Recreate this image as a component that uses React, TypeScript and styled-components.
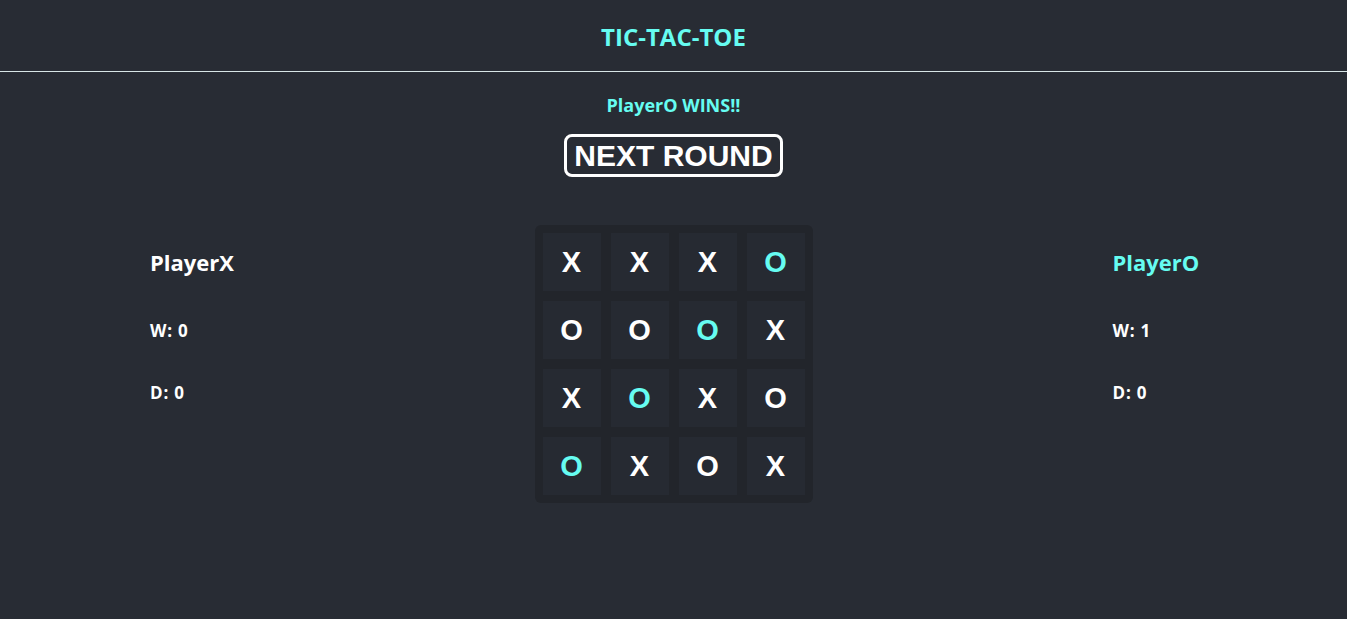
import styled, { createGlobalStyle } from 'styled-components';

const CYAN = '#66fcf1';

const GlobalStyle = createGlobalStyle`
  body {
    margin: 0;
    background: #282c34;
    font-family: "Open Sans", "Noto Sans", sans-serif;
    color: #fff;
  }
`;

const Page = styled.div`
  min-height: 619px;
  background: #282c34;
`;

const Header = styled.header`
  height: 71px;
  display: flex;
  align-items: center;
  justify-content: center;
  border-bottom: 1px solid #d8e6e6;
`;

const Title = styled.h1`
  margin: 2px 0 0;
  font-size: 24px;
  font-weight: 700;
  color: ${CYAN};
`;

const Status = styled.div`
  display: flex;
  flex-direction: column;
  align-items: center;
  padding-top: 20px;
`;

const Winner = styled.div`
  font-size: 18px;
  font-weight: 700;
  color: ${CYAN};
  line-height: 26px;
`;

const NextButton = styled.button`
  margin-top: 16px;
  font-family: "Liberation Sans", Arial, sans-serif;
  font-size: 30px;
  font-weight: 700;
  color: #fff;
  background: transparent;
  border: 3px solid #fff;
  border-radius: 8px;
  padding: 1px 7px;
  line-height: 35px;
  cursor: pointer;
`;

const Arena = styled.main`
  display: grid;
  grid-template-columns: 1fr 278px 1fr;
  margin-top: 48px;
`;

const PlayerCol = styled.div<{ $pad: number }>`
  padding-left: ${p => p.$pad}px;
  padding-top: 22px;
  display: flex;
  flex-direction: column;
`;

const PlayerName = styled.div<{ $win: boolean }>`
  font-size: 22px;
  font-weight: 700;
  line-height: 30px;
  color: ${p => (p.$win ? CYAN : '#fff')};
`;

const Stats = styled.div`
  display: flex;
  flex-direction: column;
  gap: 38px;
  margin-top: 42px;
`;

const Stat = styled.div`
  font-size: 17px;
  font-weight: 700;
  line-height: 24px;
  letter-spacing: 0.8px;
`;

const Board = styled.div`
  display: grid;
  grid-template-columns: repeat(4, 58px);
  grid-auto-rows: 58px;
  gap: 10px;
  padding: 8px;
  background: #22252b;
  border-radius: 6px;
`;

const Cell = styled.div<{ $win: boolean }>`
  display: flex;
  align-items: center;
  justify-content: center;
  background: #262a32;
  font-family: "Liberation Sans", Arial, sans-serif;
  font-size: 29px;
  font-weight: 700;
  color: ${p => (p.$win ? CYAN : '#fff')};
`;

const cells = 'XXXOOOOXXOXOOXOX'.split('');
const winning = [3, 6, 9, 12];

export default function App() {
  return (
    <Page>
      <GlobalStyle />
      <Header>
        <Title>TIC-TAC-TOE</Title>
      </Header>
      <Status>
        <Winner>PlayerO WINS!!</Winner>
        <NextButton>NEXT ROUND</NextButton>
      </Status>
      <Arena>
        <PlayerCol $pad={150}>
          <PlayerName $win={false}>PlayerX</PlayerName>
          <Stats>
            <Stat>W: 0</Stat>
            <Stat>D: 0</Stat>
          </Stats>
        </PlayerCol>
        <Board>
          {cells.map((c, i) => (
            <Cell key={i} $win={winning.includes(i)}>
              {c}
            </Cell>
          ))}
        </Board>
        <PlayerCol $pad={300}>
          <PlayerName $win>PlayerO</PlayerName>
          <Stats>
            <Stat>W: 1</Stat>
            <Stat>D: 0</Stat>
          </Stats>
        </PlayerCol>
      </Arena>
    </Page>
  );
}
